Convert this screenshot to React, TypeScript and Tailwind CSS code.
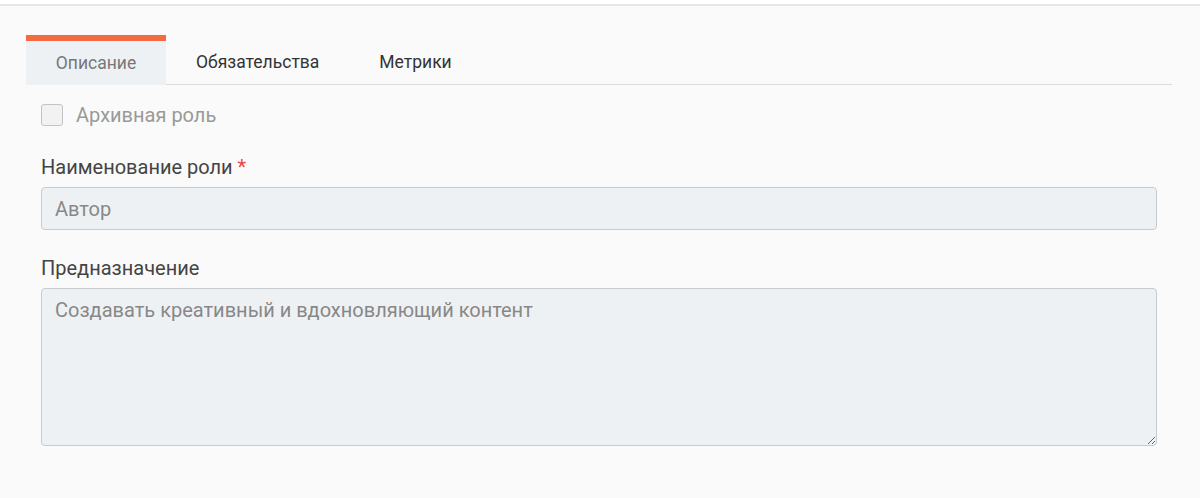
import { useState } from "react";

const tabs = ["Описание", "Обязательства", "Метрики"];

function RoleForm() {
  const [active, setActive] = useState(0);
  const [archived, setArchived] = useState(false);

  return (
    <div className="min-h-screen bg-white pt-1 font-['Roboto',sans-serif]">
      <div className="min-h-[494px] border-t-2 border-[#e6e6e6] bg-[#fafafa] pl-[26px] pr-[28px] pt-[29px]">
        {/* tabs */}
        <div className="flex border-b border-[#dcdcdc]">
          {tabs.map((t, i) => (
            <button
              key={t}
              onClick={() => setActive(i)}
              className={
                i === active
                  ? "-mb-px h-[50px] w-[140px] border-t-[6px] border-[#f26b43] bg-[#eef1f3] text-[17.5px] text-[#777]"
                  : "h-[49px] px-[30px] pt-[6px] text-[17.5px] text-[#333]"
              }
            >
              {t}
            </button>
          ))}
        </div>

        <div className="px-[15px]">
          <label className="mt-[18px] flex h-6 cursor-pointer items-center gap-[13px]">
            <input
              type="checkbox"
              checked={archived}
              onChange={(e) => setArchived(e.target.checked)}
              className="h-[22px] w-[22px] appearance-none rounded-[3px] border border-[#c4c4c4] bg-[#f2f2f2] checked:bg-[#f26b43]"
            />
            <span className="text-[20px] text-[#999]">Архивная роль</span>
          </label>

          <div className="mt-[28px] h-6 text-[20px] leading-6 text-[#444]">
            Наименование роли <span className="text-[#f0443a]">*</span>
          </div>
          <input
            defaultValue="Автор"
            className="mt-2 block h-[43px] w-full rounded-[4px] border border-[#c8cbcd] bg-[#eef1f3] px-[13px] text-[20px] text-[#888] outline-none"
          />

          <div className="mt-[26px] h-6 text-[20px] leading-6 text-[#444]">
            Предназначение
          </div>
          <textarea
            defaultValue="Создавать креативный и вдохновляющий контент"
            className="mt-2 block h-[158px] w-full rounded-[4px] border border-[#c8cbcd] bg-[#eef1f3] px-[13px] py-[9px] text-[20px] leading-6 text-[#888] outline-none"
          />
        </div>
      </div>
    </div>
  );
}

export default function App() {
  return <RoleForm />;
}
